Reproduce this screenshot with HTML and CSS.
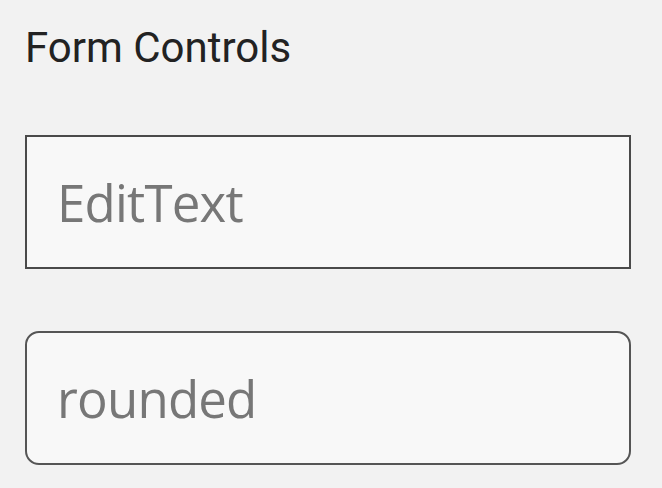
FILE: index.html
```html
<!DOCTYPE html>
<html>
<head>
<meta charset="utf-8">
<link rel="stylesheet" href="styles.css">
</head>
<body>
<h1 class="title">Form Controls</h1>
<div class="field field-square"><span class="hint">EditText</span></div>
<div class="field field-rounded"><span class="hint">rounded</span></div>
</body>
</html>
```
FILE: styles.css
```css
html, body {
  margin: 0;
  background: #f2f2f2;
}
body {
  padding: 23px 31px 0 25px;
}
.title {
  margin: 0;
  font-family: Roboto, "Liberation Sans", sans-serif;
  font-weight: 400;
  font-size: 42px;
  line-height: 50px;
  color: #222;
}
.field {
  box-sizing: border-box;
  height: 134px;
  margin-top: 62px;
  display: flex;
  align-items: center;
  padding-left: 30px;
  background: #f8f8f8;
  border: 2px solid #4a4a4a;
}
.field-rounded {
  border-color: #555;
  border-radius: 14px;
}
.hint {
  font-family: "Open Sans", sans-serif;
  font-size: 51px;
  letter-spacing: -0.8px;
  color: #777;
}
```
